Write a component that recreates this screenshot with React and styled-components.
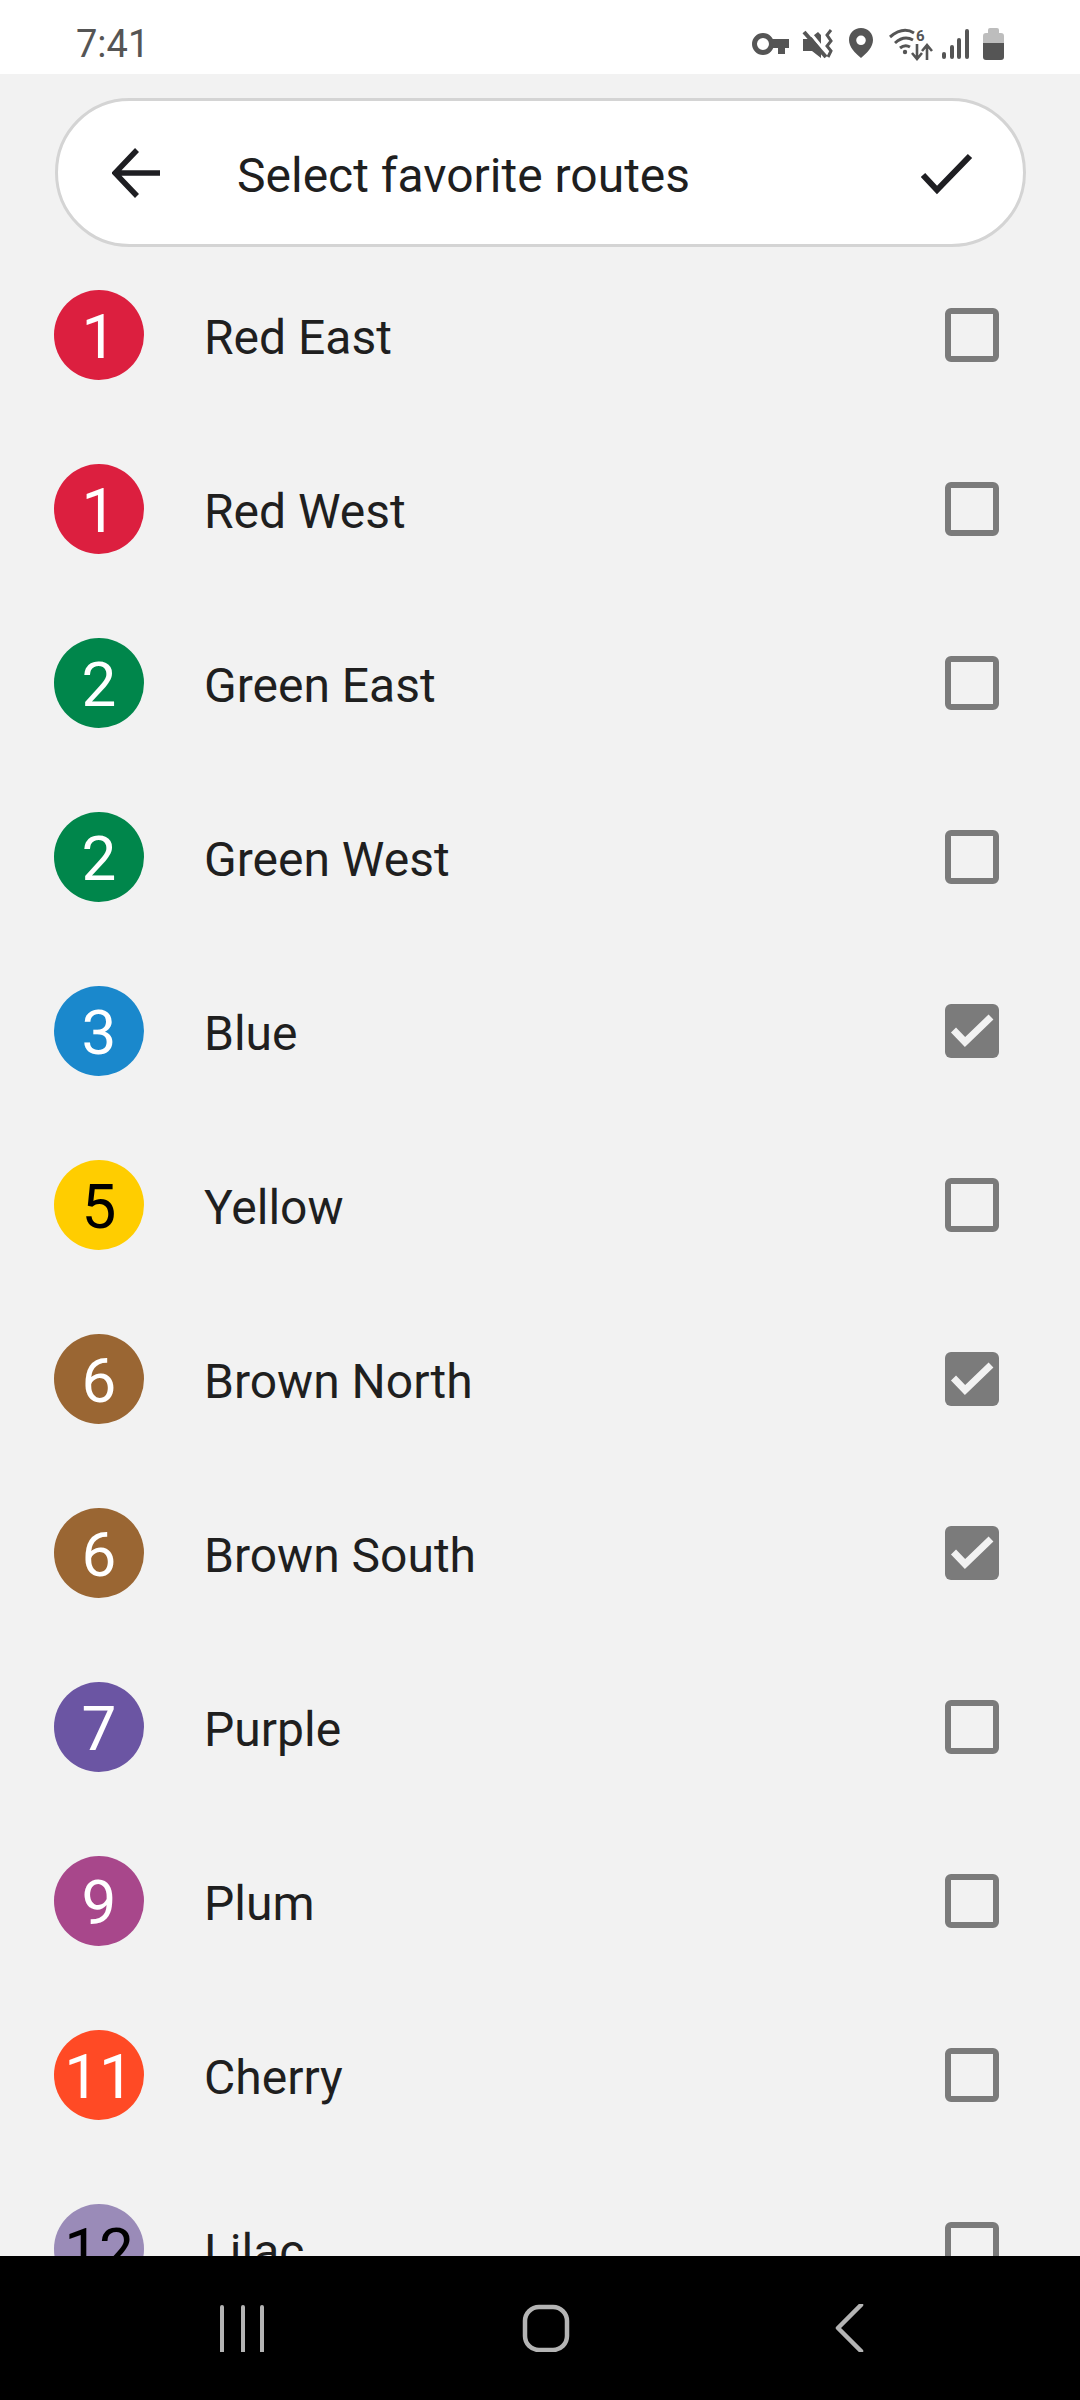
import React from "react";
import styled, { createGlobalStyle } from "styled-components";

const routes = [
  { num: 1, name: "Red East", color: "#dc1f3f" },
  { num: 1, name: "Red West", color: "#dc1f3f" },
  { num: 2, name: "Green East", color: "#00864b" },
  { num: 2, name: "Green West", color: "#00864b" },
  { num: 3, name: "Blue", color: "#1a88cc", checked: true },
  { num: 5, name: "Yellow", color: "#ffcd00", dark: true },
  { num: 6, name: "Brown North", color: "#9a6633", checked: true },
  { num: 6, name: "Brown South", color: "#9a6633", checked: true },
  { num: 7, name: "Purple", color: "#6b55a3" },
  { num: 9, name: "Plum", color: "#a8478b" },
  { num: 11, name: "Cherry", color: "#ff4a25" },
  { num: 12, name: "Lilac", color: "#9a8bb8", dark: true },
];

const App = () => {
  return (
    <>
      <GlobalStyle />
      <Screen>
        <StatusBar>
          <Clock>7:41</Clock>
          <StatusIcons />
        </StatusBar>

        <SearchWrap>
          <TitlePill>
            <PillIcon viewBox="0 0 52 52">
              <path d="M48 26H4M25 3 3 26l22 23" fill="none" stroke="#1e1e22" strokeWidth="5.500" />
            </PillIcon>
            <Title>Select favorite routes</Title>
            <PillIcon viewBox="0 0 52 52">
              <path d="M2 28l14 15L49 9" fill="none" stroke="#1e1e22" strokeWidth="6" />
            </PillIcon>
          </TitlePill>
        </SearchWrap>

        <RouteList>
          {routes.map((route) => (
            <Row key={route.name}>
              <Badge $color={route.color} $dark={route.dark}>
                {route.num}
              </Badge>
              <Label>{route.name}</Label>
              <Box $checked={route.checked}>
                {route.checked && (
                  <svg width="54" height="54" viewBox="0 0 54 54">
                    <path d="M8.5 26 20 38 46 13" fill="none" stroke="#f2f2f2" strokeWidth="7" />
                  </svg>
                )}
              </Box>
            </Row>
          ))}
        </RouteList>

        <NavBar>
          <NavIcon viewBox="0 0 48 48">
            <path d="M4 3v45M25 3v45M44 3v45" strokeWidth="4" strokeLinecap="round" />
          </NavIcon>
          <NavIcon viewBox="0 0 48 48">
            <rect x="3" y="3" width="42" height="43" rx="14" strokeWidth="4.5" />
          </NavIcon>
          <NavIcon viewBox="0 0 48 48">
            <path d="M35 2 12 25l23 23" strokeWidth="4.5" strokeLinecap="round" strokeLinejoin="round" transform="translate(0 -1)" />
          </NavIcon>
        </NavBar>
      </Screen>
    </>
  );
};

const StatusIcons = () => (
  <svg width="252" height="33" viewBox="752 28 252 33">
    {/* vpn key */}
    <circle cx="763" cy="44" r="8.5" fill="none" stroke="#555" strokeWidth="5" />
    <path d="M771 39h18v9h-4v6h-7v-6h-7z" fill="#555" />
    {/* muted speaker */}
    <path d="M803 39h6l9-7 3 3v23l-9-7h-9z" fill="#555" />
    <path d="M807 29l21 26" stroke="#fff" strokeWidth="3" />
    <path d="M804 32l22 25" stroke="#555" strokeWidth="4" />
    <path d="M831 30l-4 5 4 6-4 5 4 5-3 6" fill="none" stroke="#555" strokeWidth="3" />
    {/* location */}
    <path
      fillRule="evenodd"
      d="M861 28c7 0 12 5 12 12 0 7-6 13-12 18-6-5-12-11-12-18 0-7 5-12 12-12zm0 7.500a4.800 4.800 0 1 0 0 9.600 4.800 4.800 0 0 0 0-9.600z"
      fill="#555"
    />
    {/* wifi */}
    <g fill="none" stroke="#555" strokeWidth="3">
      <path d="M890 37Q903 26 914 33" />
      <path d="M895 43Q904 35 913 40" />
      <path d="M900 48Q905 44 910 47" />
    </g>
    <circle cx="905" cy="52" r="2.200" fill="#555" />
    <WifiDigit x="916" y="41">6</WifiDigit>
    <path d="M917 44v14M912 53l5 6 5-6M927 60V46M922 51l5-6 5 6" fill="none" stroke="#555" strokeWidth="2.600" />
    {/* signal */}
    <g fill="#555">
      <rect x="942" y="52" width="4" height="7" rx="2" />
      <rect x="950" y="45" width="4" height="14" rx="2" />
      <rect x="957" y="38" width="4" height="21" rx="2" />
      <rect x="965" y="29" width="4" height="30" rx="2" />
    </g>
    {/* battery */}
    <path d="M988 33v-3a2 2 0 0 1 2-2h7a2 2 0 0 1 2 2v3h2a3 3 0 0 1 3 3v7h-21v-7a3 3 0 0 1 3-3z" fill="#bdbdbd" />
    <path d="M983 43h21v14a3 3 0 0 1-3 3h-15a3 3 0 0 1-3-3z" fill="#555" />
  </svg>
);

export default App;

const GlobalStyle = createGlobalStyle`
  html, body {
    margin: 0;
    padding: 0;
    background: #f2f2f2;
  }
`;

const Screen = styled.div`
  display: flex;
  flex-direction: column;
  width: 1080px;
  height: 2400px;
  overflow: hidden;
  background: #f2f2f2;
  font-family: Roboto, "Noto Sans", sans-serif;
`;

const StatusBar = styled.div`
  display: flex;
  flex: none;
  justify-content: space-between;
  align-items: center;
  box-sizing: border-box;
  height: 74px;
  padding: 14px 76px 0;
  background: #fff;
`;

const Clock = styled.span`
  font-size: 38px;
  color: #555;
`;

const WifiDigit = styled.text`
  font-family: Roboto, sans-serif;
  font-size: 15px;
  font-weight: 700;
  fill: #555;
`;

const SearchWrap = styled.div`
  flex: none;
  padding: 24px 54px 1px 55px;
`;

const TitlePill = styled.div`
  display: flex;
  align-items: center;
  box-sizing: border-box;
  height: 149px;
  padding: 0 50px 0 54px;
  background: #fff;
  border: 3px solid #d4d4d4;
  border-radius: 75px;
`;

const PillIcon = styled.svg`
  flex: none;
  width: 52px;
  height: 52px;
`;

const Title = styled.span`
  flex: 1;
  margin-left: 73px;
  padding-top: 5px;
  font-size: 48px;
  color: #1f1f1f;
`;

const RouteList = styled.div`
  flex: 1;
  min-height: 0;
  overflow: hidden;
`;

const Row = styled.div`
  display: flex;
  align-items: center;
  box-sizing: border-box;
  height: 174px;
  padding: 0 81px 0 54px;
`;

const Badge = styled.div`
  display: flex;
  flex: none;
  align-items: center;
  justify-content: center;
  box-sizing: border-box;
  width: 90px;
  height: 90px;
  padding-top: 2px;
  border-radius: 50%;
  background: ${(p) => p.$color};
  color: ${(p) => (p.$dark ? "#000" : "#fff")};
  font-size: 62px;
`;

const Label = styled.span`
  flex: 1;
  margin-left: 60px;
  padding-top: 4px;
  font-size: 48px;
  color: #1f1f1f;
`;

const Box = styled.div`
  flex: none;
  box-sizing: border-box;
  width: 54px;
  height: 54px;
  border: ${(p) => (p.$checked ? "0" : "6px solid #7b7b7b")};
  border-radius: 6px;
  background: ${(p) => (p.$checked ? "#7b7b7b" : "transparent")};
`;

const NavBar = styled.div`
  display: flex;
  flex: none;
  align-items: center;
  gap: 256px;
  box-sizing: border-box;
  height: 144px;
  padding: 0 0 0 218px;
  background: #000;
`;

const NavIcon = styled.svg`
  flex: none;
  width: 48px;
  height: 48px;
  fill: none;
  stroke: #b4b4b4;
`;
